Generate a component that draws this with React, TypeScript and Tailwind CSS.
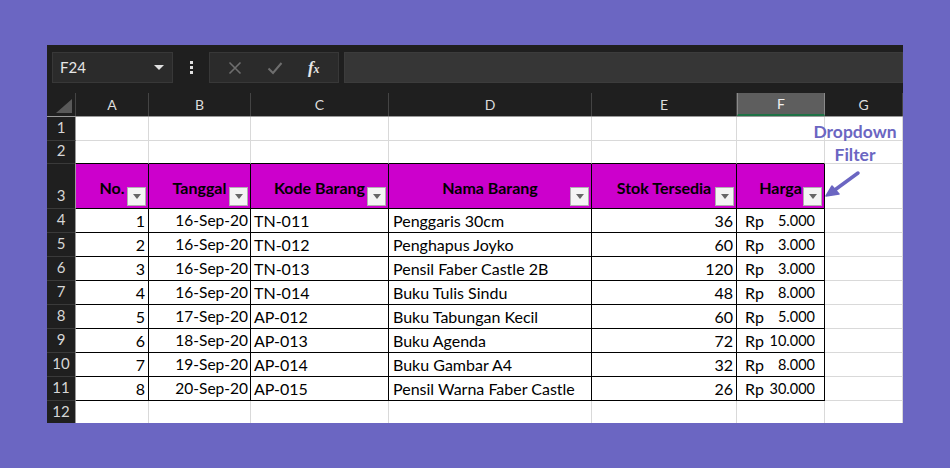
import React from 'react';

interface Item {
    no: number;
    tanggal: string;
    kode: string;
    nama: string;
    stok: number;
    harga: string;
}

const items: Item[] = [
    { no: 1, tanggal: '16-Sep-20', kode: 'TN-011', nama: 'Penggaris 30cm', stok: 36, harga: '5.000' },
    { no: 2, tanggal: '16-Sep-20', kode: 'TN-012', nama: 'Penghapus Joyko', stok: 60, harga: '3.000' },
    { no: 3, tanggal: '16-Sep-20', kode: 'TN-013', nama: 'Pensil Faber Castle 2B', stok: 120, harga: '3.000' },
    { no: 4, tanggal: '16-Sep-20', kode: 'TN-014', nama: 'Buku Tulis Sindu', stok: 48, harga: '8.000' },
    { no: 5, tanggal: '17-Sep-20', kode: 'AP-012', nama: 'Buku Tabungan Kecil', stok: 60, harga: '5.000' },
    { no: 6, tanggal: '18-Sep-20', kode: 'AP-013', nama: 'Buku Agenda', stok: 72, harga: '10.000' },
    { no: 7, tanggal: '19-Sep-20', kode: 'AP-014', nama: 'Buku Gambar A4', stok: 32, harga: '8.000' },
    { no: 8, tanggal: '20-Sep-20', kode: 'AP-015', nama: 'Pensil Warna Faber Castle', stok: 26, harga: '30.000' },
];

// widths of A..G
const colW = ['w-[73px]', 'w-[102px]', 'w-[138px]', 'w-[203px]', 'w-[145px]', 'w-[88px]', 'w-[78px]'];
const letters = ['A', 'B', 'C', 'D', 'E', 'F', 'G'];
const headers = ['No.', 'Tanggal', 'Kode Barang', 'Nama Barang', 'Stok Tersedia', 'Harga'];

const RowNum: React.FC<{ n: number; h: string }> = ({ n, h }) => (
    <div className={`w-[29px] ${h} shrink-0 flex items-end justify-center pb-[2px] bg-[#1f1f1f] border-r border-r-[#9a9a9a] border-b border-b-[#3a3a3a] text-[15px] text-[#d6d6d6]`}>
        {n}
    </div>
);

const FilterBtn = () => (
    <div className="absolute right-[2px] bottom-[2px] w-[19px] h-[19px] bg-[#f4f4f4] border border-[#b0b0b0] flex items-center justify-center">
        <div className="w-0 h-0 border-x-[4px] border-x-transparent border-t-[5px] border-t-[#666666]" />
    </div>
);

const EmptyRow: React.FC<{ n: number; h: string; tableBelow?: boolean }> = ({ n, h, tableBelow }) => (
    <div className="flex">
        <RowNum n={n} h={h} />
        {colW.map((w, i) => (
            <div
                key={i}
                className={`${w} ${h} shrink-0 bg-white border-r border-r-[#d9d9d9] border-b ${tableBelow && i < 6 ? 'border-b-black' : 'border-b-[#d9d9d9]'}`}
            />
        ))}
    </div>
);

export default function App() {
    return (
        <div className="w-[950px] h-[468px] bg-[#6b66c2] pt-[45px] pl-[47px]" style={{ fontFamily: 'Lato, "Open Sans", sans-serif' }}>
            <div className="relative w-[856px] h-[378px] bg-[#1f1f1f] overflow-hidden flex flex-col">
                {/* formula bar */}
                <div className="h-[48px] shrink-0 flex items-start pt-[7px] pl-[5px]">
                    <div className="w-[121px] h-[31px] bg-[#2b2b2b] border border-[#383838] flex items-center justify-between pl-[7px] pr-[8px]">
                        <span className="text-[15px] text-[#e6e6e6]">F24</span>
                        <div className="w-0 h-0 border-x-[5px] border-x-transparent border-t-[5px] border-t-[#e0e0e0]" />
                    </div>
                    <div className="w-[36px] h-[31px] flex flex-col items-center justify-center gap-[2px]">
                        <div className="w-[3px] h-[3px] bg-[#e0e0e0]" />
                        <div className="w-[3px] h-[3px] bg-[#e0e0e0]" />
                        <div className="w-[3px] h-[3px] bg-[#e0e0e0]" />
                    </div>
                    <div className="w-[130px] h-[31px] bg-[#2b2b2b] border border-[#383838] flex items-center justify-around px-[6px]">
                        <svg width="14" height="14" viewBox="0 0 14 14">
                            <path d="M1.5 1.5 L12.5 12.5 M12.5 1.5 L1.5 12.5" stroke="#6e6e6e" strokeWidth="1.6" />
                        </svg>
                        <svg width="16" height="14" viewBox="0 0 16 14">
                            <path d="M1.5 7.5 L6 12 L14.5 2" stroke="#6e6e6e" strokeWidth="2" fill="none" />
                        </svg>
                        <span className="text-[17px] italic font-bold text-[#e6e6e6]" style={{ fontFamily: '"Liberation Serif", serif' }}>
                            f<span className="text-[12px]">x</span>
                        </span>
                    </div>
                    <div className="ml-[5px] flex-1 h-[31px] bg-[#363636] border border-[#3c3c3c]" />
                </div>

                {/* column headers */}
                <div className="flex h-[24px] shrink-0 border-b border-b-[#9a9a9a]">
                    <div className="w-[29px] h-full relative shrink-0 bg-[#1f1f1f] border-r border-r-[#444]">
                        <div className="absolute right-[3px] bottom-[3px] w-0 h-0 border-l-[16px] border-l-transparent border-b-[14px] border-b-[#595959]" />
                    </div>
                    {colW.map((w, i) => (
                        <div
                            key={i}
                            className={`${w} h-full shrink-0 flex items-center justify-center text-[14px] ${
                                i === 5
                                    ? 'bg-[#5e5e5e] text-[#f0f0f0] border-b-2 border-b-[#1e7145] border-x border-x-[#8a8a8a]'
                                    : 'bg-[#1f1f1f] text-[#dcdcdc] border-r border-r-[#444]'
                            }`}
                        >
                            {letters[i]}
                        </div>
                    ))}
                </div>

                {/* rows */}
                <div className="flex flex-col text-[16px] text-black">
                    <EmptyRow n={1} h="h-[24px]" />
                    <EmptyRow n={2} h="h-[23px]" tableBelow />

                    <div className="flex">
                        <RowNum n={3} h="h-[45px]" />
                        {colW.map((w, i) =>
                            i < 6 ? (
                                <div
                                    key={i}
                                    className={`${w} h-[45px] shrink-0 relative bg-[#cc00cc] border-r border-b border-black flex items-start justify-center pt-[12px] text-[16px] font-bold`}
                                >
                                    {headers[i]}
                                    <FilterBtn />
                                </div>
                            ) : (
                                <div key={i} className={`${w} h-[45px] shrink-0 bg-white border-r border-b border-[#d9d9d9]`} />
                            )
                        )}
                    </div>

                    {items.map((it, r) => (
                        <div key={it.no} className="flex">
                            <RowNum n={r + 4} h="h-[24px]" />
                            <div className={`${colW[0]} h-[24px] shrink-0 bg-white border-r border-b border-black flex items-center justify-end pr-[3px]`}>{it.no}</div>
                            <div className={`${colW[1]} h-[24px] shrink-0 bg-white border-r border-b border-black flex items-center justify-end pr-[2px] text-[15.5px]`}>{it.tanggal}</div>
                            <div className={`${colW[2]} h-[24px] shrink-0 bg-white border-r border-b border-black flex items-center pl-[3px]`}>{it.kode}</div>
                            <div className={`${colW[3]} h-[24px] shrink-0 bg-white border-r border-b border-black flex items-center pl-[4px]`}>{it.nama}</div>
                            <div className={`${colW[4]} h-[24px] shrink-0 bg-white border-r border-b border-black flex items-center justify-end pr-[3px]`}>{it.stok}</div>
                            <div className={`${colW[5]} h-[24px] shrink-0 bg-white border-r border-b border-black flex items-center justify-between pl-[8px] pr-[9px]`}>
                                <span>Rp</span>
                                <span className="text-[14.5px]">{it.harga}</span>
                            </div>
                            <div className={`${colW[6]} h-[24px] shrink-0 bg-white border-r border-b border-[#d9d9d9]`} />
                        </div>
                    ))}

                    <EmptyRow n={12} h="h-[24px]" />
                </div>

                {/* annotation */}
                <div className="absolute left-[758px] top-[75px] w-[100px] text-center text-[17.5px] leading-[23px] font-bold text-[#6b66c2]">
                    Dropdown
                    <br />
                    Filter
                </div>
                <svg className="absolute left-[774px] top-[122px]" width="44" height="34" viewBox="0 0 44 34">
                    <path d="M37 6 L11 25" stroke="#6b66c2" strokeWidth="3.5" strokeLinecap="round" />
                    <path d="M5 29 L18 27 L11 19 Z" fill="#6b66c2" stroke="#6b66c2" strokeWidth="1.5" strokeLinejoin="round" />
                </svg>
            </div>
        </div>
    );
}
